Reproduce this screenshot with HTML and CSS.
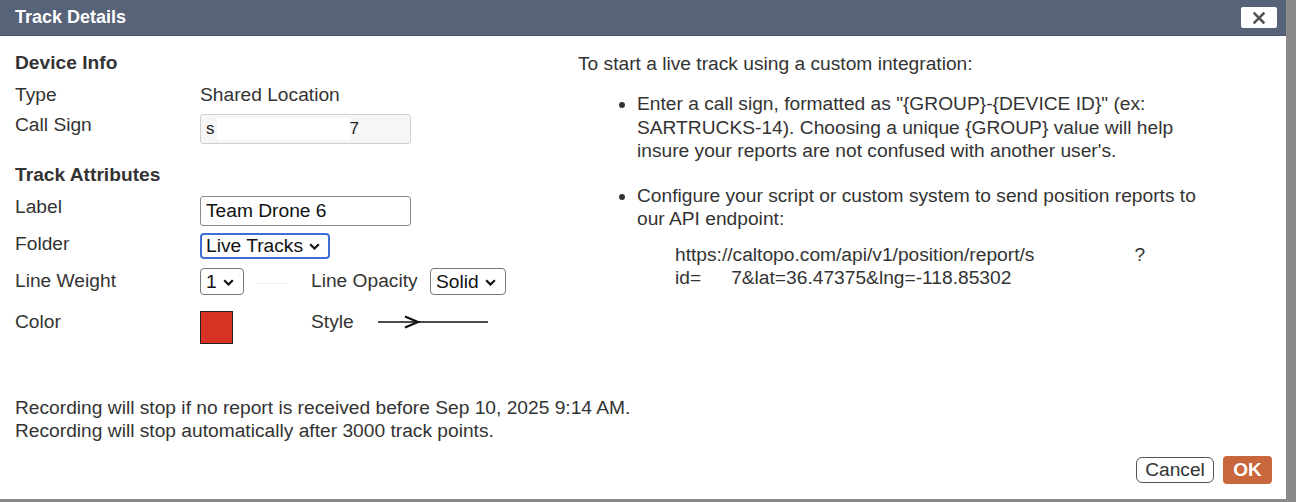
FILE: index.html
```html
<!DOCTYPE html>
<html>
<head>
<meta charset="utf-8">
<title>Track Details</title>
<link rel="stylesheet" href="styles.css">
</head>
<body>
<div class="dialog">
  <div class="titlebar">
    <span class="title">Track Details</span>
    <span class="close"><svg width="12" height="12" viewBox="0 0 12 12"><path d="M1.5 1.5L10.5 10.5M10.5 1.5L1.5 10.5" stroke="#555" stroke-width="2.6" stroke-linecap="square"/></svg></span>
  </div>
  <div class="main">
    <div class="left">
      <div class="heading h-device">Device Info</div>
      <div class="row r-type"><span class="lbl">Type</span><span class="val">Shared Location</span></div>
      <div class="row r-call"><span class="lbl">Call Sign</span>
        <div class="ro-input"><span>s</span><span class="redact"></span><span>7</span></div>
      </div>
      <div class="heading h-track">Track Attributes</div>
      <div class="row r-label"><span class="lbl">Label</span><div class="text-input">Team Drone 6</div></div>
      <div class="row r-folder"><span class="lbl">Folder</span>
        <div class="select focus"><span>Live Tracks</span><svg class="chev" width="11" height="7" viewBox="0 0 11 7"><path d="M1.2 1.2L5.5 5.5L9.8 1.2" fill="none" stroke="#111" stroke-width="2.2"/></svg></div>
      </div>
      <div class="row r-weight"><span class="lbl">Line Weight</span>
        <div class="val-cell">
          <div class="select"><span>1</span><svg class="chev" width="11" height="7" viewBox="0 0 11 7"><path d="M1.2 1.2L5.5 5.5L9.8 1.2" fill="none" stroke="#111" stroke-width="2.2"/></svg></div>
          <span class="preview-line"></span>
        </div>
        <span class="lbl2">Line Opacity</span>
        <div class="select"><span>Solid</span><svg class="chev" width="11" height="7" viewBox="0 0 11 7"><path d="M1.2 1.2L5.5 5.5L9.8 1.2" fill="none" stroke="#111" stroke-width="2.2"/></svg></div>
      </div>
      <div class="row r-color"><span class="lbl">Color</span>
        <div class="val-cell"><span class="swatch"></span></div>
        <span class="lbl2">Style</span>
        <svg class="arrow" width="112" height="14" viewBox="0 0 112 14"><path d="M0 7H110" stroke="#111" stroke-width="1.4"/><path d="M27 1.5L40 7L27 12.5" fill="none" stroke="#111" stroke-width="2.2"/></svg>
      </div>
    </div>
    <div class="right">
      <p class="intro">To start a live track using a custom integration:</p>
      <ul class="steps">
        <li>Enter a call sign, formatted as "{GROUP}-{DEVICE ID}" (ex: SARTRUCKS-14). Choosing a unique {GROUP} value will help insure your reports are not confused with another user's.</li>
        <li>Configure your script or custom system to send position reports to our API endpoint:
          <div class="url">https://caltopo.com/api/v1/position/report/s<span class="gap1"></span>?<br>id=<span class="gap2"></span>7&amp;lat=36.47375&amp;lng=-118.85302</div>
        </li>
      </ul>
    </div>
  </div>
  <div class="notes">
    <div>Recording will stop if no report is received before Sep 10, 2025 9:14 AM.</div>
    <div>Recording will stop automatically after 3000 track points.</div>
  </div>
  <div class="buttons">
    <span class="btn cancel">Cancel</span>
    <span class="btn ok">OK</span>
  </div>
</div>
</body>
</html>
```

FILE: styles.css
```css
* { box-sizing: border-box; }
html, body { margin: 0; padding: 0; }
body {
  width: 1296px;
  height: 502px;
  background: #8a8a8a;
  font-family: "Liberation Sans", Arial, sans-serif;
  font-size: 19.2px;
  color: #333;
  overflow: hidden;
}
.dialog {
  width: 1286px;
  height: 499px;
  background: #fff;
  display: flex;
  flex-direction: column;
}
.titlebar {
  height: 36px;
  flex: none;
  background: #566379;
  display: flex;
  align-items: center;
  justify-content: space-between;
  padding: 0 9px 0 15px;
  border-bottom: 1px solid #4a566b;
}
.title {
  color: #fff;
  font-weight: bold;
  font-size: 18px;
}
.close {
  width: 36px;
  height: 21px;
  background: #fff;
  border-radius: 2px;
  display: flex;
  align-items: center;
  justify-content: center;
}
.main {
  flex: 1;
  display: flex;
  padding-left: 15px;
}
.left {
  width: 563px;
  padding-top: 16px;
}
.heading {
  font-weight: bold;
  line-height: 22px;
}
.h-track { margin-top: 20px; }
.row {
  display: grid;
  grid-template-columns: 185px 111px 119px auto;
  align-items: start;
  line-height: 22px;
}
.val { grid-column: 2 / 5; }
.r-type { margin-top: 10px; }
.r-call { margin-top: 8px; }
.r-label { margin-top: 10px; }
.r-folder { margin-top: 7px; }
.r-weight { margin-top: 9px; }
.r-weight .lbl, .r-weight .lbl2 { padding-top: 2px; }
.r-color { margin-top: 16px; }
.ro-input, .text-input {
  grid-column: 2 / 4;
  width: 211px;
  height: 30px;
  display: flex;
  align-items: center;
  padding-left: 5px;
}
.ro-input {
  background: #f6f6f6;
  border: 1px solid #d0d0d0;
  border-radius: 3px;
  font-size: 17px;
  color: #222;
}
.redact {
  width: 133px;
  height: 22px;
  background: #fff;
  margin-left: 2px;
}
.text-input {
  border: 1px solid #8a8a8a;
  border-radius: 3px;
  color: #111;
}
.select {
  height: 27px;
  display: inline-flex;
  align-items: center;
  gap: 6px;
  border: 1px solid #777;
  border-radius: 4px;
  padding: 0 9px 0 5px;
  color: #111;
  justify-self: start;
}
.select.focus {
  grid-column: 2 / 4;
  height: 26px;
  border: 2px solid #3f6fd6;
  padding-left: 4px;
  padding-right: 8px;
}
.chev { margin-top: 1px; }
.val-cell {
  display: flex;
  align-items: center;
  gap: 12px;
}
.preview-line {
  width: 32px;
  height: 1px;
  background: #eee;
  margin-top: 3px;
}
.swatch {
  width: 33px;
  height: 33px;
  background: #d83224;
  border: 1px solid #222;
}
.arrow { margin-top: 4px; margin-left: -52px; }
.right {
  flex: 1;
  padding-top: 16px;
}
.intro {
  margin: 0;
  line-height: 23px;
}
.steps {
  margin: 17px 0 0 0;
  padding-left: 59px;
  width: 634px;
}
.steps li { line-height: 23.5px; }
.steps li + li { margin-top: 21px; }
.url {
  margin-top: 12px;
  margin-left: 38px;
  line-height: 23px;
}
.gap1 { display: inline-block; width: 100px; }
.gap2 { display: inline-block; width: 30px; }
.notes {
  padding-left: 15px;
  line-height: 23px;
}
.buttons {
  display: flex;
  justify-content: flex-end;
  align-items: center;
  gap: 9px;
  padding: 14px 14px 15px 0;
}
.btn {
  display: inline-flex;
  align-items: center;
  justify-content: center;
}
.cancel {
  width: 78px;
  height: 26px;
  border: 1px solid #555;
  border-radius: 6px;
  color: #333;
}
.ok {
  width: 49px;
  height: 28px;
  background: #c8663c;
  border-radius: 4px;
  color: #fff;
  font-weight: bold;
  font-size: 19px;
}
```
